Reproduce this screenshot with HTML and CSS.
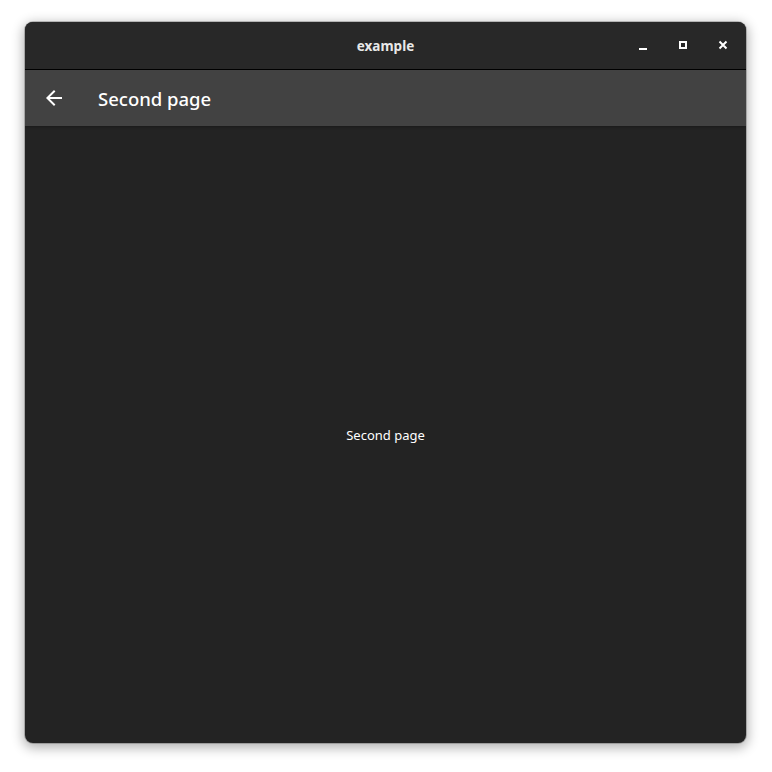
FILE: index.html
```html
<!DOCTYPE html>
<html>
<head>
<meta charset="utf-8">
<link rel="stylesheet" href="styles.css">
</head>
<body>
<div class="window">
  <div class="titlebar">
    <span class="title">example</span>
    <div class="controls">
      <span class="ctl"><svg width="16" height="16" viewBox="0 0 16 16"><rect x="4" y="10" width="8" height="2" fill="#fff"/></svg></span>
      <span class="ctl"><svg width="16" height="16" viewBox="0 0 16 16"><rect x="5" y="4" width="6" height="6" fill="none" stroke="#fff" stroke-width="2"/></svg></span>
      <span class="ctl"><svg width="16" height="16" viewBox="0 0 16 16"><path d="M4.5 3.5 L11.5 10.5 M11.5 3.5 L4.5 10.5" stroke="#fff" stroke-width="2"/></svg></span>
    </div>
  </div>
  <div class="appbar">
    <span class="back"><svg width="24" height="24" viewBox="0 0 24 24"><path d="M20 11H7.83l5.59-5.59L12 4l-8 8 8 8 1.41-1.41L7.83 13H20v-2z" fill="#fff"/></svg></span>
    <span class="apptitle">Second page</span>
  </div>
  <div class="content">
    <span class="label">Second page</span>
  </div>
</div>
</body>
</html>
```
FILE: styles.css
```css
html, body {
  margin: 0;
  padding: 0;
  background: #ffffff;
}
body {
  padding: 22px 26px 29px 25px;
  font-family: "Noto Sans", "Open Sans", sans-serif;
}
.window {
  width: 721px;
  height: 721px;
  border-radius: 8px;
  overflow: hidden;
  background: #232323;
  box-shadow: 0 3px 12px 2px rgba(0,0,0,0.3), 0 0 0 1px rgba(0,0,0,0.2);
  display: flex;
  flex-direction: column;
}
.titlebar {
  height: 47px;
  background: #282828;
  border-bottom: 1px solid #000;
  position: relative;
  display: flex;
  align-items: center;
  justify-content: center;
  flex-shrink: 0;
}
.title {
  color: #e8e8e8;
  font-weight: 700;
  font-size: 13.5px;
}
.controls {
  position: absolute;
  right: 7px;
  top: 0;
  height: 47px;
  display: flex;
  align-items: center;
  gap: 8px;
}
.ctl {
  width: 32px;
  height: 32px;
  display: flex;
  align-items: center;
  justify-content: center;
}
.appbar {
  height: 56px;
  background: #424242;
  display: flex;
  align-items: center;
  box-shadow: 0 1px 3px rgba(0,0,0,0.3);
  flex-shrink: 0;
}
.back {
  width: 24px;
  height: 24px;
  margin-left: 17px;
  display: flex;
}
.apptitle {
  margin-left: 32px;
  color: #ffffff;
  font-size: 18.5px;
  font-weight: 500;
  padding-top: 1px;
}
.content {
  flex: 1;
  display: flex;
  align-items: center;
  justify-content: center;
}
.label {
  color: #ffffff;
  font-size: 13px;
}
```
